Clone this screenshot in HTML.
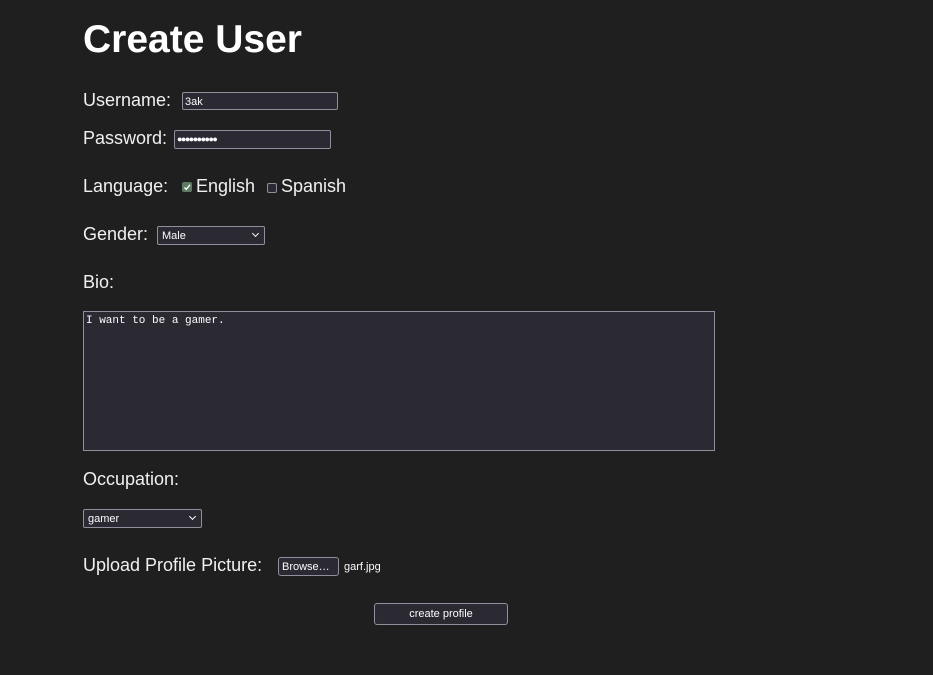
<!DOCTYPE html>
<html><head><style>
body{margin:0;width:933px;height:675px;background:#1f1f1f;color:#fbfbfe;font-family:"Liberation Sans",sans-serif;position:relative;overflow:hidden}
.a{position:absolute;white-space:nowrap}
.l{font-size:18px;color:#f0f0f0}
.box{position:absolute;background:#2b2a33;border:1px solid #8f8f9d;border-radius:2px;box-sizing:border-box;color:#fbfbfe;font-size:11px}
.sel::after{content:"";position:absolute;right:6px;top:4px;width:4px;height:4px;border-right:1.5px solid #fbfbfe;border-bottom:1.5px solid #fbfbfe;transform:rotate(45deg)}
.cb{position:absolute;width:10px;height:10px;border:1px solid #8f8f9d;border-radius:2px;box-sizing:border-box;background:#2b2a33}
</style></head><body>
<div class="a" style="left:83px;top:18px;font-size:39px;font-weight:bold;color:#fff">Create User</div>
<div class="a l" style="left:83px;top:90px">Username:</div>
<div class="box" style="left:182px;top:92px;width:156px;height:18px;padding:3px 2px;line-height:13px">3ak</div>
<div class="a l" style="left:83px;top:128px">Password:</div>
<div class="box" style="left:174px;top:130px;width:157px;height:19px;padding:1px 2px;line-height:14px;font-size:9px;letter-spacing:-1.5px">●●●●●●●●●●</div>
<div class="a l" style="left:83px;top:176px">Language:</div>
<div class="cb" style="left:182px;top:182px;background:#5e7a63;border-color:#5e7a63"><svg width="8" height="8" style="position:absolute;left:0;top:0"><path d="M1.5 4.5 L3.3 6.3 L7 1.8" stroke="#fff" stroke-width="1.4" fill="none"/></svg></div>
<div class="a l" style="left:196px;top:176px">English</div>
<div class="cb" style="left:267px;top:183px"></div>
<div class="a l" style="left:281px;top:176px">Spanish</div>
<div class="a l" style="left:83px;top:224px">Gender:</div>
<div class="box sel" style="left:157px;top:226px;width:108px;height:19px;padding:3px 4px;line-height:13px">Male</div>
<div class="a l" style="left:83px;top:272px">Bio:</div>
<div class="box" style="left:83px;top:311px;width:632px;height:140px;padding:3px 2px;font-family:'Liberation Mono',monospace;font-size:11px;border-radius:0">I want to be a gamer.</div>
<div class="a l" style="left:83px;top:469px">Occupation:</div>
<div class="box sel" style="left:83px;top:509px;width:119px;height:19px;padding:3px 4px;line-height:13px">gamer</div>
<div class="a l" style="left:83px;top:555px">Upload Profile Picture:</div>
<div class="box" style="left:278px;top:557px;width:61px;height:19px;padding:3px 3px;line-height:13px;border-radius:3px">Browse…</div>
<div class="a" style="left:344px;top:561px;font-size:11px">garf.jpg</div>
<div class="box" style="left:374px;top:603px;width:134px;height:22px;text-align:center;line-height:21px;border-radius:3px">create profile</div>
</body></html>
